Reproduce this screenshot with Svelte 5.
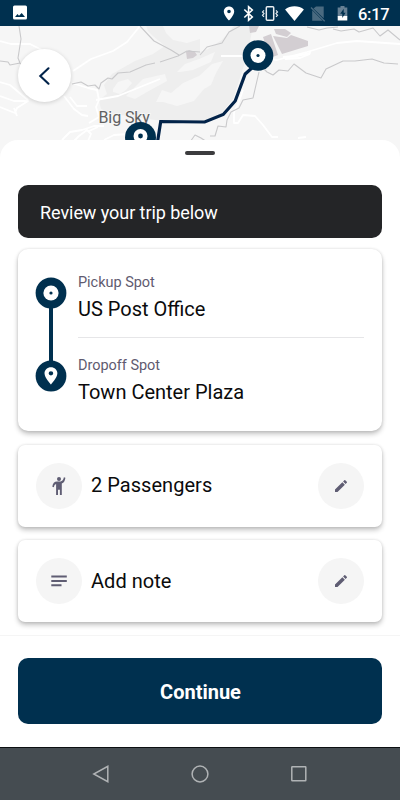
<script lang="ts">
  const spots = [
    { label: 'Pickup Spot', name: 'US Post Office', icon: 'dot' },
    { label: 'Dropoff Spot', name: 'Town Center Plaza', icon: 'pin' },
  ];

  const options = [
    { id: 'passengers', text: '2 Passengers' },
    { id: 'note', text: 'Add note' },
  ];

  const pinPath =
    'M12 2C8.13 2 5 5.13 5 9c0 5.25 7 13 7 13s7-7.75 7-13c0-3.87-3.13-7-7-7zm0 9.5a2.5 2.5 0 1 1 0-5 2.5 2.5 0 0 1 0 5z';
</script>

<div class="screen">
  <header class="status-bar">
    <svg class="picture" width="16" height="16" viewBox="0 0 16 16">
      <rect x="1" y="0.5" width="14" height="14" rx="1.5" fill="#fff" />
      <path d="M3 12l2.5-3 1.5 1.700L9.700 8 13 12z" fill="#00304f" />
    </svg>
    <svg width="136" height="26" viewBox="222 0 136 26">
      <path d="M229 6.500c-3 0-5.200 2.200-5.200 5 0 3.800 5.200 9 5.200 9s5.200-5.200 5.200-9c0-2.800-2.200-5-5.200-5zm0 6.800a1.800 1.800 0 1 1 0-3.600 1.800 1.800 0 0 1 0 3.600z" fill="#fff" />
      <path d="M244.300 9.500l8 7.500-3.700 3.200V6.800l3.700 3.200-8 7.500" fill="none" stroke="#fff" stroke-width="1.600" />
      <rect x="266.300" y="6.800" width="7.400" height="13.400" rx="1" fill="none" stroke="#e9eef1" stroke-width="1.500" />
      <path d="M264 10.300l-1.500 1.600 1.500 1.700-1.500 1.700 1.500 1.600M276 10.300l1.500 1.600-1.500 1.700 1.500 1.700-1.500 1.600" fill="none" stroke="#e9eef1" stroke-width="1.200" />
      <path d="M294.500 21l-9.400-11.600c5-4.200 13.800-4.200 18.800 0z" fill="#fff" />
      <path d="M316 6.500h7.700v11.800l-10.200-9.800zM312.200 10.300l10.500 10.500h-10.500z" fill="#4a6a80" />
      <path d="M311 7.500l13.700 13.700" stroke="#4a6a80" stroke-width="1.300" />
      <path d="M340.500 6h4v1.600h2.800v9h-9.600v-9h2.800z" fill="#668094" />
      <path d="M337.700 16h9.600v4.500h-9.600z" fill="#fff" />
      <path d="M343.700 8.800l-3.500 5h2.100V18l3.300-5.300h-1.900z" fill="#00304f" />
    </svg>
    <span class="clock">6:17</span>
  </header>

  <section class="map">
    <svg class="map-canvas" width="400" height="134" viewBox="0 26 400 134">
      <rect y="26" width="400" height="134" fill="#f6f6f6" />

      <!-- terrain -->
      <g fill="#eeeeee">
        <path d="M137 26h116l-6 30-14 43-14 17-18 6-46-2-20-3-22-3-12-5-2-9 8-6-3-9 8-11 23-13 18-7 12-8-12-10-5-5-2-6z" />
      </g>
      <g fill="#f6f6f6">
        <path d="M163 26h37v13l-13 4-14-3-7-7z" />
        <path d="M177 72l8-8 14-5 16-7-4 10-18 8-13 2z" />
        <path d="M113 89l5-7 10-3 4 4-6 7-6 4-7-2z" />
        <path d="M126 96l17-17 22-5 2 7-20 11-12 7z" />
        <path d="M156 102l6-12 9 3 12-10 16-7 13-12 11-3-7 12-5 12-7 4-10 12-17 5-14-4z" />
        <path d="M200 26h34l-12 14-14 9-8 3z" />
      </g>
      <g fill="#d3ced2">
        <path d="M249 26h10l-3 6-6 1zM274 29h11l6 4-4 4-11-3z" />
        <path d="M263 37l8-3 7 21-8 3z" />
        <path d="M273 36l14 2 4-3 17 6v5l-26 8z" />
        <path d="M186 52l3-2 6 2 2 3-4 3-6 1z" />
      </g>

      <!-- minor roads -->
      <g fill="none" stroke="#fff" stroke-width="1.800" stroke-linejoin="round">
        <path d="M73 71l18-12 22-8 14-9 13-16" />
        <path d="M0 41l11 3 19 0 12 6" />
        <path d="M0 82l10 3 18 15M0 96l14 5 14 0-11 7-2 5-15-6M14 108l3 8" />
        <path d="M72 83l16 5 9 2 2 10-3 7 3 10-10 6" />
        <path d="M96 100l22-4 42-17" />
        <path d="M64 96l10 13 8 6 6 1M70 97l7 9 10 0M62 140l8-8 12-2 12-4 10 0M74 141l5-5 8-6 4 4-3 7M98 127l-9 4M104 140l10-5 15-1" />
        <path d="M221 56h30l26 4 30-8 30-9 20-2 43 3" />
        <path d="M283 57l14-1 13-3 0-2M285 59l15-1 10-4" />
        <path d="M243 90l-5 14-4 8 0 11h4l5-8 12 1 8 9 9 12h6M298 138l8-1" />
      </g>

      <!-- boundaries and trails -->
      <g fill="none" stroke="#c9c9cb" stroke-width="1.100" stroke-linejoin="round">
        <path d="M19 26l2 13-3 19 2 5 5 6M20 63l-10 2-2-3-8-1" />
        <path d="M72 84l9-2 7 4 7-1 4 4 2-6 7-5 4 1 6-6 12-1 16-7 9-2M160 62l18-6 9-5 13 1M140 26l14 15 17 9 8 5" />
        <path d="M200 55l7-8 15-4 7-11 11-6M307 27l12 3 8-2 11-1M333 29l8 2 13-2 5 3 14-4 7 8 8-6 12 10" />
        <path d="M262 67l5 5 6 3 6-5 9 1 6-7 8 6 4 3 15 5 5-9 17-8 12 0 17-2 12 4 14 1" />
        <path d="M259 72l-6 26-10 2-4 8-8 4-4 8-1 7-8-1-3 10-5 0M190 142l5-7 6 3 6 4" />
      </g>

      <text class="map-label" x="98.500" y="123">Big Sky</text>

      <path d="M157.500 142l3.200-20.500 44 .5 18.500-7.500 12-13.500 10-27 10-9" fill="none" stroke="#022349" stroke-width="3.200" />
      <g>
        <circle cx="258" cy="55.500" r="15.300" fill="#00304f" />
        <circle cx="258" cy="55.500" r="7.500" fill="#fff" />
        <circle cx="258" cy="55.500" r="1.600" fill="#00304f" />
        <circle cx="140.500" cy="137.500" r="15.500" fill="#00304f" />
        <circle cx="140.500" cy="136" r="7" fill="#fff" />
        <circle cx="140.500" cy="136" r="2.400" fill="#00304f" />
      </g>
    </svg>
    <button class="back" aria-label="Back">
      <svg width="20" height="20" viewBox="0 0 20 20">
        <path d="M13.500 2.300L5.300 10l8.200 7.700" fill="none" stroke="#02234a" stroke-width="2.100" stroke-linecap="round" />
      </svg>
    </button>
  </section>

  <main class="sheet">
    <div class="handle"></div>
    <div class="content">
      <div class="banner">Review your trip below</div>

      <div class="card trip">
        {#each spots as spot}
          <div class="spot">
            <svg class="marker" width="32" height="32" viewBox="0 0 32 32">
              <circle cx="16" cy="16" r="15.400" fill="#00304f" />
              {#if spot.icon === 'dot'}
                <path d="M16 30v56" stroke="#00304f" stroke-width="4" />
                <circle cx="16" cy="16" r="7.600" fill="#fff" />
                <circle cx="16" cy="16" r="1.600" fill="#00304f" />
              {:else}
                <path d={pinPath} fill="#fff" transform="translate(4.900 5.600) scale(.92 .86)" />
              {/if}
            </svg>
            <div class="spot-text">
              <span class="spot-label">{spot.label}</span>
              <span class="spot-name">{spot.name}</span>
            </div>
          </div>
        {/each}
      </div>

      {#each options as option}
        <div class="card option">
          <span class="circle">
            {#if option.id === 'passengers'}
              <svg width="24" height="24" viewBox="0 0 24 24" fill="#5f5d73">
                <circle cx="12" cy="5" r="2" />
                <path d="M18.400 3.800l-1.500-.5c-.5 2.700-1.700 3.900-3.400 4.200H10C7.400 7.500 5.700 9.400 5.300 12.800l1.600.4c.3-1.800.9-3 2.200-3.300V21h1.900v-5.200h1.900V21h1.900V9.500c2.200-.8 3.200-2.800 3.600-5.700z" />
              </svg>
            {:else}
              <svg width="24" height="24" viewBox="0 0 24 24" fill="#5f5d73">
                <path d="M4.300 6.500h15.500v2H4.300zM4.300 11h15.500v2H4.300zM4.300 15.300h10.200v2H4.300z" />
              </svg>
            {/if}
          </span>
          <span class="option-text">{option.text}</span>
          <button class="circle" aria-label="Edit">
            <svg width="16" height="16" viewBox="0 0 24 24" fill="#5f5d73">
              <path d="M3 17.250V21h3.750L17.810 9.940l-3.750-3.750L3 17.250zM20.710 7.040a1 1 0 0 0 0-1.410l-2.340-2.340a1 1 0 0 0-1.410 0l-1.830 1.830 3.750 3.750 1.830-1.830z" />
            </svg>
          </button>
        </div>
      {/each}
    </div>

    <footer class="actions">
      <button class="continue">Continue</button>
    </footer>
  </main>

  <nav class="nav-bar">
    <svg width="20" height="20" viewBox="0 0 20 20">
      <path d="M16.800 2.300v15.400L2.800 10z" />
    </svg>
    <svg width="20" height="20" viewBox="0 0 20 20">
      <circle cx="10" cy="10" r="7.900" />
    </svg>
    <svg width="20" height="20" viewBox="0 0 20 20">
      <rect x="2.800" y="2.800" width="14" height="14" rx=".5" />
    </svg>
  </nav>
</div>

<style>
  :global(body) {
    margin: 0;
  }

  .screen {
    display: flex;
    flex-direction: column;
    width: 400px;
    height: 800px;
    overflow: hidden;
    font-family: Roboto, 'Liberation Sans', sans-serif;
    color: #0b0b0c;
    background: #fff;
  }

  svg {
    display: block;
    flex: none;
  }

  button {
    border: 0;
    padding: 0;
    font: inherit;
  }

  .status-bar {
    display: flex;
    align-items: center;
    height: 26px;
    flex: none;
    padding-left: 12px;
    color: #fff;
    background: #00304f;
  }

  .picture {
    margin-right: auto;
  }

  .clock {
    width: 42px;
    font-size: 16.500px;
    font-weight: 500;
    line-height: 26px;
    letter-spacing: -0.3px;
    padding-top: 3px;
  }

  .map {
    position: relative;
    height: 134px;
    margin-bottom: -20px;
    flex: none;
    padding: 23px 18px;
    box-sizing: border-box;
  }

  .map-canvas {
    position: absolute;
    top: 0;
    left: 0;
  }

  .map-label {
    font-size: 16px;
    letter-spacing: -0.1px;
    fill: #626262;
    stroke: #f6f6f6;
    stroke-width: 2px;
    paint-order: stroke;
  }

  .back {
    position: relative;
    display: grid;
    place-items: center;
    width: 53px;
    height: 53px;
    border-radius: 50%;
    background: #fff;
    box-shadow: 0 1px 4px rgba(0, 0, 0, 0.16);
  }

  .sheet {
    position: relative;
    display: flex;
    flex-direction: column;
    flex: 1;
    background: #fff;
    border-radius: 18px 18px 0 0;
  }

  .handle {
    width: 30px;
    height: 4px;
    margin: 11px auto 0;
    border-radius: 2px;
    background: #3c3c3e;
  }

  .content {
    display: flex;
    flex-direction: column;
    padding: 29.500px 18px 12.500px;
  }

  .banner {
    height: 53px;
    line-height: 55px;
    padding-left: 22px;
    margin-bottom: 11.500px;
    border-radius: 10px;
    font-size: 18px;
    letter-spacing: -0.06px;
    color: #fff;
    background: #242527;
  }

  .card {
    box-sizing: border-box;
    background: #fff;
    box-shadow: 0 3px 5px rgba(0, 0, 0, 0.24), 0 0 3px rgba(0, 0, 0, 0.12);
  }

  .trip {
    display: flex;
    flex-direction: column;
    height: 182px;
    padding: 23px 18px 0 17px;
    border-radius: 10px;
    margin-bottom: 13.500px;
  }

  .spot {
    display: flex;
    flex: none;
    gap: 11px;
    height: 83px;
  }

  .spot:last-child {
    height: 66px;
  }

  .marker {
    margin-top: 5px;
    overflow: visible;
  }

  .spot-text {
    display: flex;
    flex-direction: column;
    flex: 1;
    box-sizing: border-box;
    height: 66px;
  }

  .spot:first-child .spot-text {
    border-bottom: 1px solid #e6e6e8;
  }

  .spot-label {
    font-size: 14.500px;
    line-height: 20px;
    letter-spacing: -0.03px;
    padding-top: 1px;
    color: #5f5b70;
  }

  .spot-name {
    font-size: 20px;
    line-height: 24px;
    margin-top: 4px;
  }

  .option {
    display: flex;
    align-items: center;
    height: 82px;
    padding: 0 18px;
    border-radius: 7px;
  }

  .option + .option {
    margin-top: 13.500px;
  }

  .circle {
    display: grid;
    place-items: center;
    width: 46px;
    height: 46px;
    border-radius: 50%;
    background: #f5f5f5;
  }

  .option-text {
    flex: 1;
    padding-left: 9px;
    font-size: 20px;
    line-height: 24px;
    margin-top: -1px;
    letter-spacing: 0.04px;
  }

  .actions {
    flex: 1;
    padding: 22px 18px 0;
    border-top: 1px solid #f5f5f5;
  }

  .continue {
    display: block;
    width: 100%;
    height: 66px;
    padding: 3px 0 0 1px;
    border-radius: 10px;
    font-size: 20px;
    font-weight: 700;
    color: #fff;
    background: #00304f;
  }

  .nav-bar {
    display: flex;
    align-items: center;
    justify-content: center;
    gap: 79px;
    height: 53px;
    flex: none;
    box-sizing: border-box;
    border-top: 1px solid #0d1012;
    background: #454c51;
  }

  .nav-bar svg {
    fill: none;
    stroke: #b0b3b5;
    stroke-width: 1.500;
  }
</style>
